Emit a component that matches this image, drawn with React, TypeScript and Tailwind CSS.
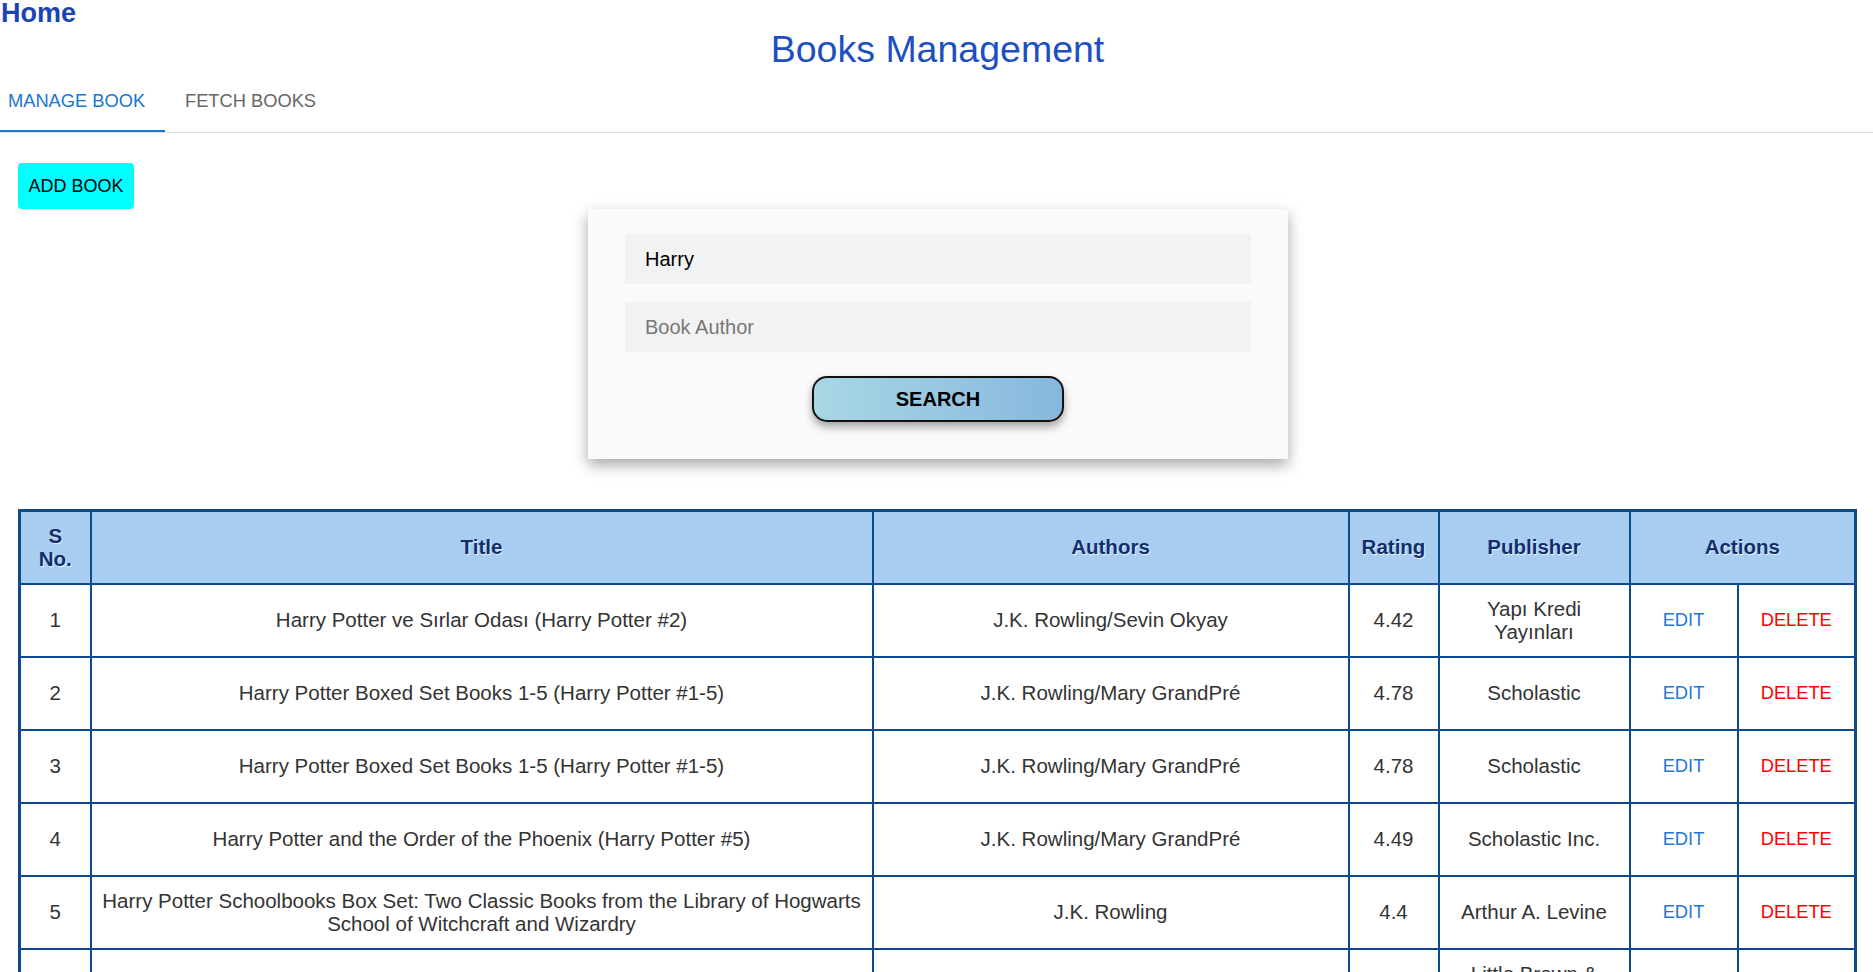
import React from "react";

type Book = { title: string; authors: string; rating: string; publisher: string };

const books: Book[] = [
  { title: "Harry Potter ve Sırlar Odası (Harry Potter #2)", authors: "J.K. Rowling/Sevin Okyay", rating: "4.42", publisher: "Yapı Kredi Yayınları" },
  { title: "Harry Potter Boxed Set Books 1-5 (Harry Potter #1-5)", authors: "J.K. Rowling/Mary GrandPré", rating: "4.78", publisher: "Scholastic" },
  { title: "Harry Potter Boxed Set Books 1-5 (Harry Potter #1-5)", authors: "J.K. Rowling/Mary GrandPré", rating: "4.78", publisher: "Scholastic" },
  { title: "Harry Potter and the Order of the Phoenix (Harry Potter #5)", authors: "J.K. Rowling/Mary GrandPré", rating: "4.49", publisher: "Scholastic Inc." },
  { title: "Harry Potter Schoolbooks Box Set: Two Classic Books from the Library of Hogwarts School of Witchcraft and Wizardry", authors: "J.K. Rowling", rating: "4.4", publisher: "Arthur A. Levine" },
  { title: "Harry Potter Collection (Harry Potter #1-6)", authors: "J.K. Rowling", rating: "4.73", publisher: "Little Brown & Company" },
  { title: "Harry Potter and the Half-Blood Prince (Harry Potter #6)", authors: "J.K. Rowling", rating: "4.57", publisher: "Scholastic Inc." },
];

function Cell({ children, className = "" }: { children: React.ReactNode; className?: string }) {
  return (
    <td className="border-2 border-[#0c4a8b] p-0 align-middle">
      <div className={"h-[71px] flex items-center justify-center text-center px-[6px] pb-[2px] leading-[23px] " + className}>{children}</div>
    </td>
  );
}

function Head({ children, colSpan }: { children: React.ReactNode; colSpan?: number }) {
  return (
    <th colSpan={colSpan} className="border-2 border-[#0c4a8b] p-0 bg-[#a8cdf0] align-middle">
      <div className="h-[71px] flex items-center justify-center text-center px-[16px] pb-[2px] leading-[23px] font-bold text-[#112f6e] [text-shadow:1px_1px_1px_rgba(255,255,255,0.8)]">
        {children}
      </div>
    </th>
  );
}

export default function App() {
  return (
    <div className="font-['Liberation_Sans',Arial,sans-serif] bg-white min-h-screen w-full overflow-hidden">
      <div className="text-[27px] font-bold leading-none text-[#1b44b0] pl-[1px] h-[26px]">Home</div>
      <div className="mt-[5px] text-center text-[37.5px] leading-none text-[#1d4fc1] h-[37px] pl-[2px]">Books Management</div>

      <div className="h-[65px] flex border-b border-[#e0e0e0]">
        <div className="relative w-[165px] h-full pt-[24px] pl-[8px] text-[18.3px] leading-none text-[#1976d2]">
          MANAGE BOOK
          <div className="absolute left-0 right-0 bottom-0 h-[2px] bg-[#1976d2]" />
        </div>
        <div className="h-full pt-[24px] pl-[20px] text-[18.3px] leading-none text-[#666666]">FETCH BOOKS</div>
      </div>

      <div className="pt-[30px] pl-[18px]">
        <button className="w-[116px] h-[46px] bg-[#00ffff] rounded-[4px] text-[18px] text-black leading-none">ADD BOOK</button>
      </div>

      <div className="ml-[588px] w-[700px] h-[250px] bg-[#fafafa] shadow-[0_6px_14px_rgba(0,0,0,0.35)] pt-[25px] px-[37px] flex flex-col">
        <div className="h-[50px] bg-[#f2f2f2] flex items-center pl-[20px] text-[20px] text-black">Harry</div>
        <div className="mt-[18px] h-[50px] bg-[#f2f2f2] flex items-center pl-[20px] text-[20px] text-[#777777]">Book Author</div>
        <div className="mt-[24px] flex justify-center">
          <button className="w-[252px] h-[46px] rounded-[15px] border-2 border-[#111111] bg-gradient-to-r from-[#a9d7e5] to-[#86b8de] shadow-[0_5px_8px_rgba(0,0,0,0.35)] text-[20px] font-bold text-black leading-none">
            SEARCH
          </button>
        </div>
      </div>

      <div className="mt-[50px] ml-[18px]">
        <table className="table-fixed border-collapse border-[3px] border-[#0c4a8b] w-[1836px] text-[20.5px] text-[#333333]">
          <colgroup>
            <col className="w-[71px]" />
            <col className="w-[782px]" />
            <col className="w-[476px]" />
            <col className="w-[90px]" />
            <col className="w-[191px]" />
            <col className="w-[108px]" />
            <col className="w-[118px]" />
          </colgroup>
          <thead>
            <tr>
              <Head>S No.</Head>
              <Head>Title</Head>
              <Head>Authors</Head>
              <Head>Rating</Head>
              <Head>Publisher</Head>
              <Head colSpan={2}>Actions</Head>
            </tr>
          </thead>
          <tbody>
            {books.map((b, i) => (
              <tr key={i}>
                <Cell>{i + 1}</Cell>
                <Cell>{b.title}</Cell>
                <Cell>{b.authors}</Cell>
                <Cell>{b.rating}</Cell>
                <Cell className="px-[16px]">{b.publisher}</Cell>
                <Cell className="text-[18.3px] text-[#1f78d6]">EDIT</Cell>
                <Cell className="text-[18.3px] text-[#ff0000]">DELETE</Cell>
              </tr>
            ))}
          </tbody>
        </table>
      </div>
    </div>
  );
}
